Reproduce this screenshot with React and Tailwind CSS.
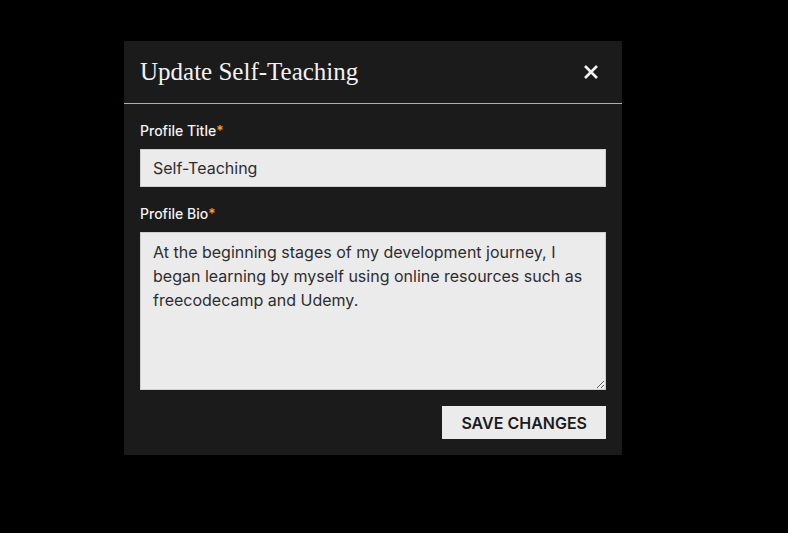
import React, { useState } from 'react';

const App = () => {
  const [title, setTitle] = useState('Self-Teaching');
  const [bio, setBio] = useState(
    'At the beginning stages of my development journey, I began learning by myself using online resources such as freecodecamp and Udemy.'
  );

  return (
    <div className="min-h-screen w-full bg-black pt-[41px] pl-[124px]" style={{ fontFamily: 'Inter, "Noto Sans", sans-serif' }}>
      <div className="w-[498px] bg-[#1b1b1b]">
        {/* Header */}
        <div className="flex h-[63px] items-center justify-between border-b border-[#f5a623] px-4">
          <h2 className="text-[25px] leading-[30px] text-[#f2f2f2]" style={{ fontFamily: '"Liberation Serif", "DejaVu Serif", serif' }}>
            Update Self-Teaching
          </h2>
          <button className="mr-[3px] flex h-6 w-6 items-center justify-center text-[#f2f2f2]">
            <svg width="16" height="16" viewBox="0 0 16 16" fill="none">
              <path d="M2 2L14 14M14 2L2 14" stroke="currentColor" strokeWidth="2.6" strokeLinecap="butt" />
            </svg>
          </button>
        </div>

        {/* Body */}
        <div className="px-4 pt-[17px] pb-4">
          <label className="block text-sm font-medium leading-5 text-[#f2f2f2]">
            Profile Title<span className="text-[#f5a623]">*</span>
          </label>
          <input
            type="text"
            value={title}
            onChange={(e) => setTitle(e.target.value)}
            className="mt-[8px] block h-[38px] w-full border border-[#cfcfcf] bg-[#ebebeb] px-3 text-base text-[#2e2e2e] outline-none"
          />

          <label className="mt-[17px] block text-sm font-medium leading-5 text-[#f2f2f2]">
            Profile Bio<span className="text-[#f5a623]">*</span>
          </label>
          <textarea
            value={bio}
            onChange={(e) => setBio(e.target.value)}
            className="mt-[8px] block h-[158px] w-full border border-[#cfcfcf] bg-[#ebebeb] px-3 py-[7px] text-base leading-6 text-[#2e2e2e] outline-none"
          />

          <div className="mt-4 flex justify-end">
            <button className="h-[33px] bg-[#ebebeb] px-[19px] text-base font-semibold uppercase text-[#1b1b1b]">
              Save Changes
            </button>
          </div>
        </div>
      </div>
    </div>
  );
};

export default App;
